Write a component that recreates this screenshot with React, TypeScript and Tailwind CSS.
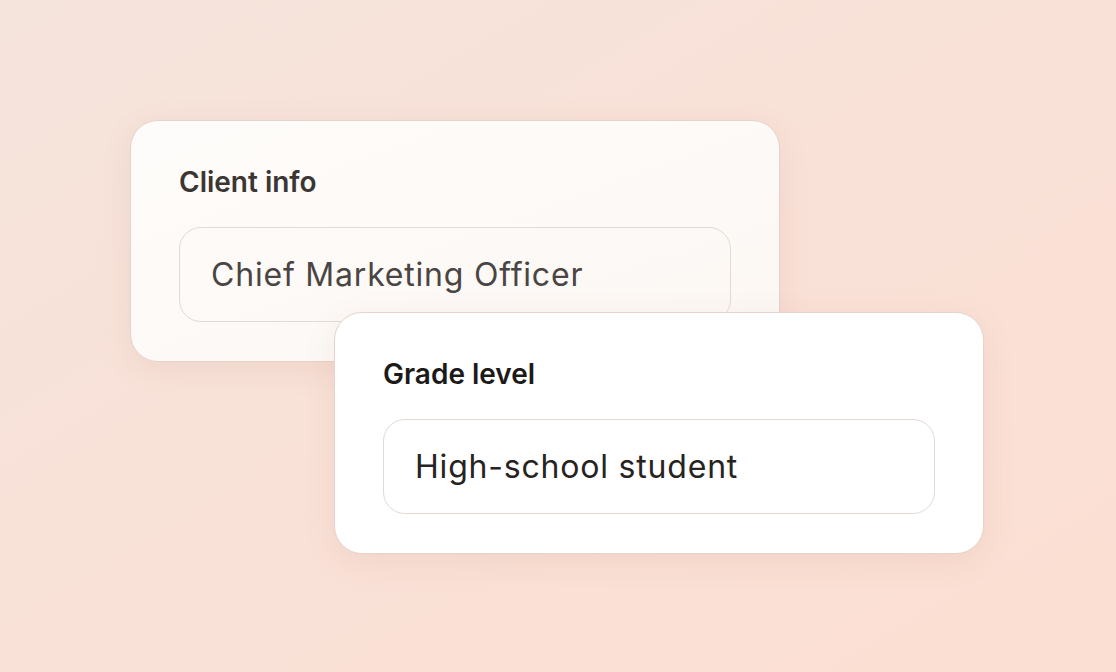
import React from "react";

function Card({ label, value, bg, labelColor, valueColor }: { label: string; value: string; bg: string; labelColor: string; valueColor: string }) {
  return (
    <div className={`w-[650px] h-[242px] rounded-[28px] border border-[#e6d3ca] ${bg} shadow-[0_8px_30px_rgba(180,120,100,0.12)] pl-[48px] pr-[48px] pt-[43px]`}>
      <div className={`text-[28px] leading-[36px] font-semibold ${labelColor}`}>{label}</div>
      <div className="mt-[27px] h-[95px] rounded-[22px] border border-[#e3dad5] flex items-center pl-[31px]">
        <span className={`text-[32px] tracking-[0.8px] ${valueColor}`}>{value}</span>
      </div>
    </div>
  );
}

export default function App() {
  return (
    <div
      className="w-[1116px] h-[672px] overflow-hidden bg-gradient-to-br from-[#f5e4dc] via-[#f9e1d7] to-[#fcdfd3] pt-[120px] pl-[130px]"
      style={{ fontFamily: "Inter, 'Noto Sans', sans-serif" }}
    >
      <Card label="Client info" value="Chief Marketing Officer" bg="bg-gradient-to-br from-[#fefcfa] to-[#fcf7f3]" labelColor="text-[#3b3633]" valueColor="text-[#4a4542]" />
      <div className="ml-[204px] mt-[-50px] relative">
        <Card label="Grade level" value="High-school student" bg="bg-white" labelColor="text-[#1c1a19]" valueColor="text-[#262321]" />
      </div>
    </div>
  );
}
